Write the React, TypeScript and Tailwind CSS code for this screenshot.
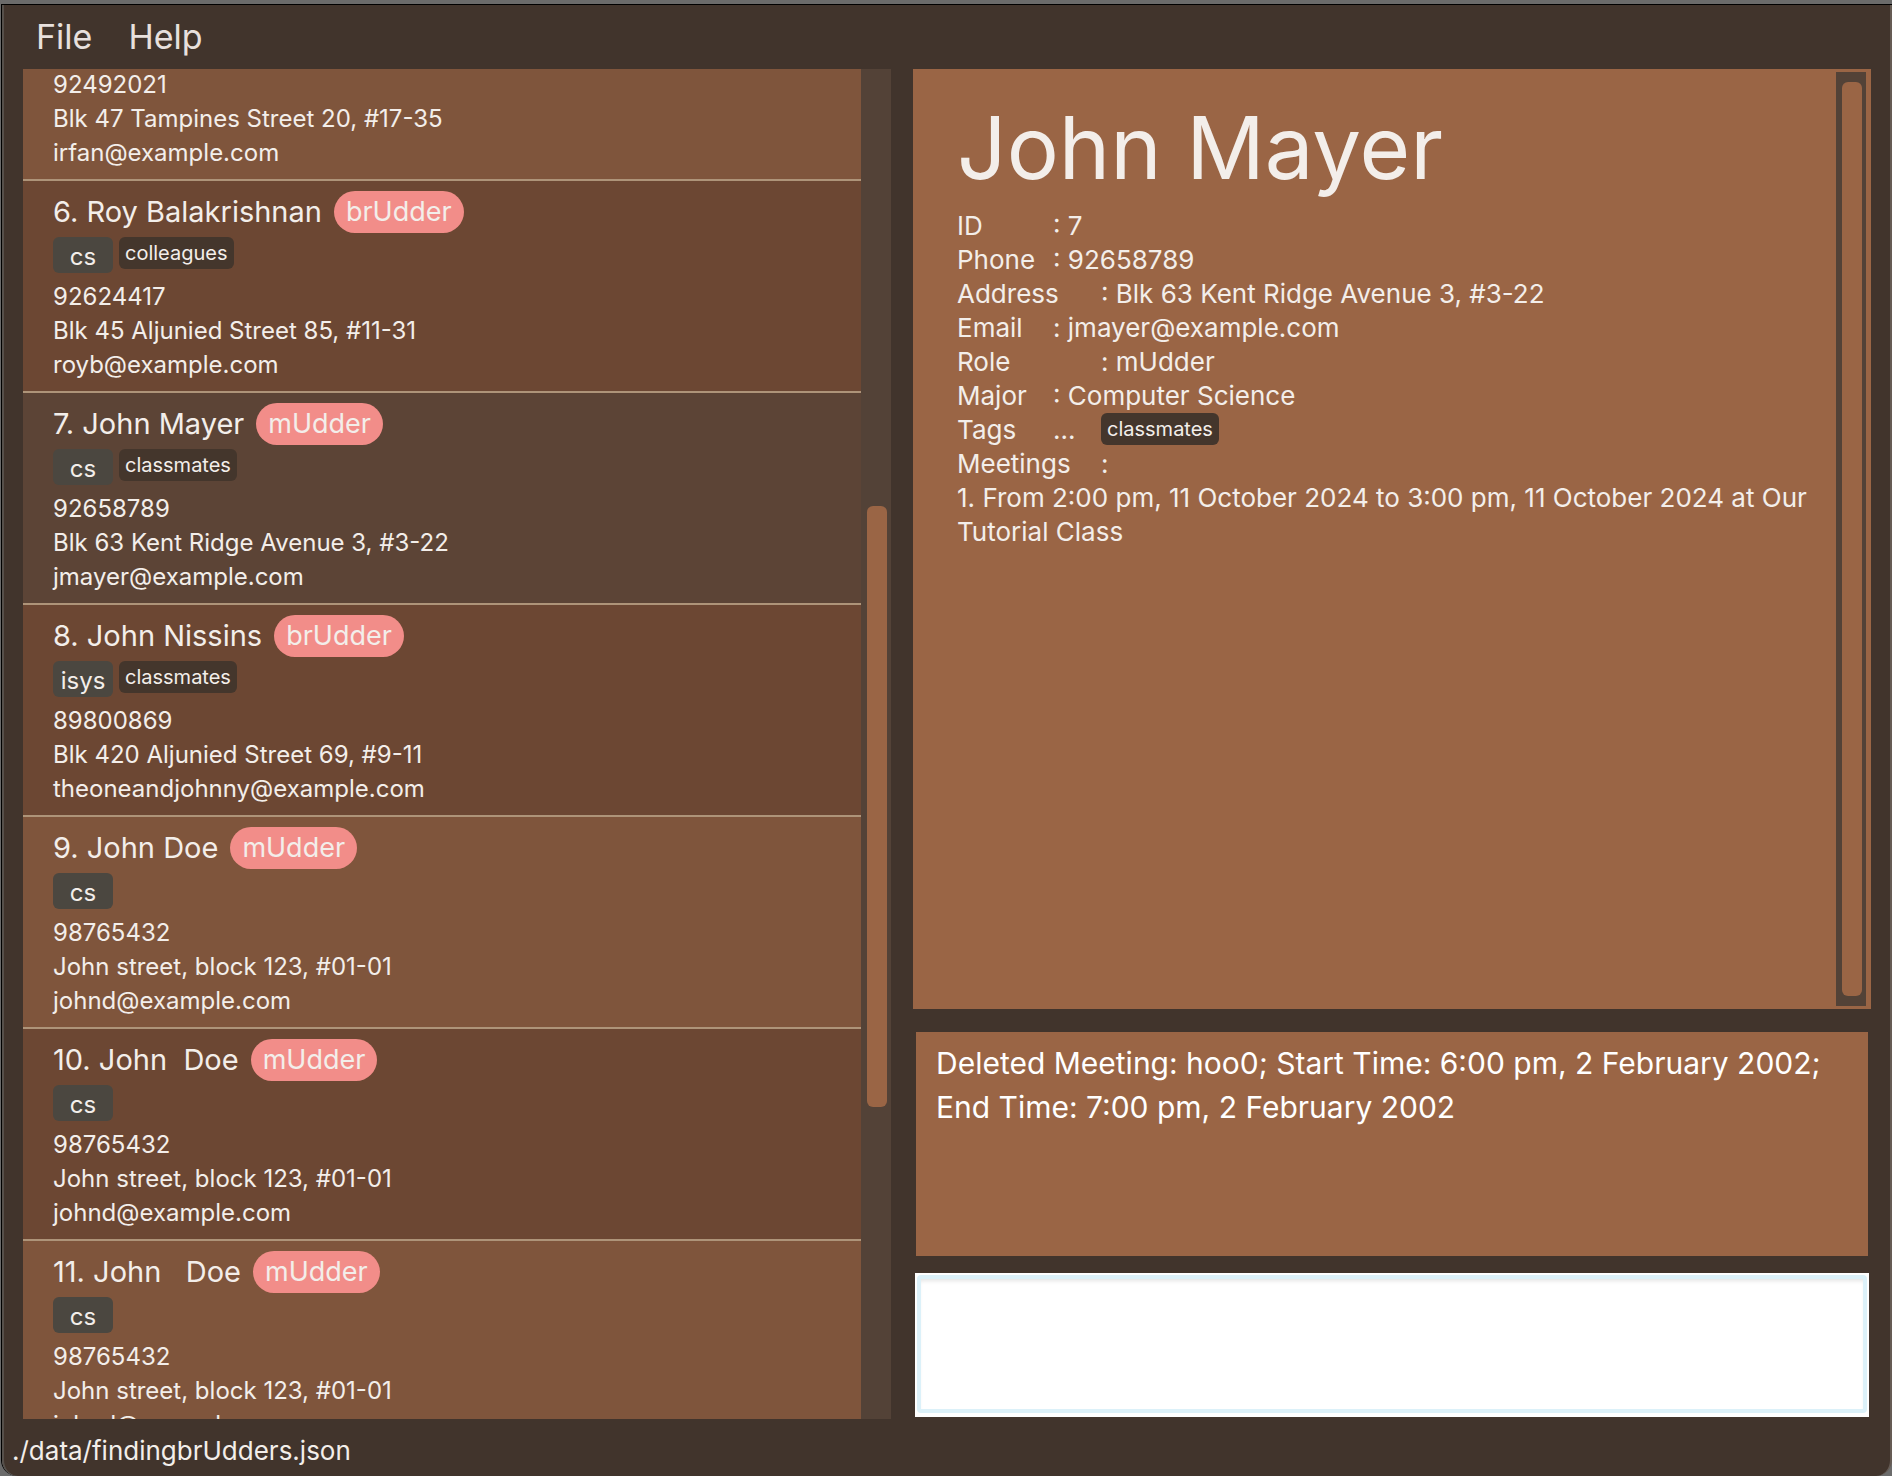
type Contact = {
  name?: string;
  role?: string;
  major?: string;
  tags?: string[];
  phone: string;
  address: string;
  email: string;
  tone: 'light' | 'dark' | 'selected';
};

const contacts: Contact[] = [
  { phone: '92492021', address: 'Blk 47 Tampines Street 20, #17-35', email: 'irfan@example.com', tone: 'light' },
  { name: '6. Roy Balakrishnan', role: 'brUdder', major: 'cs', tags: ['colleagues'], phone: '92624417', address: 'Blk 45 Aljunied Street 85, #11-31', email: 'royb@example.com', tone: 'dark' },
  { name: '7. John Mayer', role: 'mUdder', major: 'cs', tags: ['classmates'], phone: '92658789', address: 'Blk 63 Kent Ridge Avenue 3, #3-22', email: 'jmayer@example.com', tone: 'selected' },
  { name: '8. John Nissins', role: 'brUdder', major: 'isys', tags: ['classmates'], phone: '89800869', address: 'Blk 420 Aljunied Street 69, #9-11', email: 'theoneandjohnny@example.com', tone: 'dark' },
  { name: '9. John Doe', role: 'mUdder', major: 'cs', phone: '98765432', address: 'John street, block 123, #01-01', email: 'johnd@example.com', tone: 'light' },
  { name: '10. John  Doe', role: 'mUdder', major: 'cs', phone: '98765432', address: 'John street, block 123, #01-01', email: 'johnd@example.com', tone: 'dark' },
  { name: '11. John   Doe', role: 'mUdder', major: 'cs', phone: '98765432', address: 'John street, block 123, #01-01', email: 'johnd@example.com', tone: 'light' },
];

const tones = {
  light: 'bg-[#7f553c]',
  dark: 'bg-[#6c4733]',
  selected: 'bg-[#5c4436]',
};

const details = [
  { label: 'ID', value: '7', wide: false },
  { label: 'Phone', value: '92658789', wide: false },
  { label: 'Address', value: 'Blk 63 Kent Ridge Avenue 3, #3-22', wide: true },
  { label: 'Email', value: 'jmayer@example.com', wide: false },
  { label: 'Role', value: 'mUdder', wide: true },
  { label: 'Major', value: 'Computer Science', wide: false },
];

function Tag({ text }: { text: string }) {
  return (
    <span className="flex h-8 items-center rounded-md bg-[#44362c] px-1.5 text-[20px] leading-none">{text}</span>
  );
}

function ContactCard({ contact }: { contact: Contact }) {
  return (
    <li className={`shrink-0 border-b-2 border-[#ae9479] pr-4 pb-[9px] pl-[30px] ${tones[contact.tone]}`}>
      {contact.name && (
        <>
          <div className="flex items-center gap-3 pt-2.5">
            <h2 className="text-[29px] leading-[42px] whitespace-pre">{contact.name}</h2>
            <span className="flex h-[42px] items-center rounded-full bg-[#f28d89] px-3 text-[27px]">{contact.role}</span>
          </div>
          <div className="flex items-start gap-1.5 pt-1 pb-[7px]">
            <span className="flex h-9 w-[60px] items-center justify-center rounded-md bg-[#4b4740] pt-1 text-[24px] leading-none">
              {contact.major}
            </span>
            {contact.tags?.map((tag) => <Tag key={tag} text={tag} />)}
          </div>
        </>
      )}
      <p className="text-[24px] leading-[34px]">{contact.phone}</p>
      <p className="text-[24px] leading-[34px]">{contact.address}</p>
      <p className="text-[24px] leading-[34px]">{contact.email}</p>
    </li>
  );
}

export default function App() {
  return (
    <div className="flex h-screen flex-col bg-[#6b6b6b] pt-1 pl-px font-['Inter',sans-serif] text-[#f3eeea]">
      <div className="flex min-h-0 flex-1 flex-col rounded-b-2xl border-t border-l border-black">
        <div className="flex min-h-0 flex-1 flex-col rounded-b-2xl border-r-2 border-l-2 border-r-[#655b54] border-l-[#56504b] bg-[#41342c]">
          <nav className="flex h-16 shrink-0 items-center gap-9 px-8 pb-0.5 text-[34px] text-[#e8e0dd]">
            <button type="button">File</button>
            <button type="button">Help</button>
          </nav>

          <main className="flex min-h-0 flex-1 gap-[22px] pr-[19px] pl-[19px]">
            <section aria-label="Contacts" className="flex min-w-0 flex-[868] overflow-hidden">
              <ul className="-mt-px flex min-w-0 flex-1 flex-col">
                {contacts.map((contact, i) => (
                  <ContactCard key={i} contact={contact} />
                ))}
              </ul>
              <div className="flex w-[30px] flex-col bg-[#534237] pr-1 pl-1.5">
                <div className="flex-[437]" />
                <div className="flex-[601] rounded-md bg-[#9a6545]" />
                <div className="flex-[312]" />
              </div>
            </section>

            <div className="flex min-w-0 flex-[958] flex-col">
              <section aria-label="Contact details" className="flex min-h-0 flex-1 bg-[#9a6545] py-[3px] pr-[5px]">
                <div className="min-w-0 flex-1 pt-6 pl-11 text-[26px] leading-[34px]">
                  <h1 className="mb-[9px] text-[87px] leading-[104px]">John Mayer</h1>
                  <dl>
                    {details.map((row) => (
                      <div key={row.label} className="flex">
                        <dt className={row.wide ? 'w-36' : 'w-24'}>{row.label}</dt>
                        <dd>: {row.value}</dd>
                      </div>
                    ))}
                    <div className="flex h-[34px]">
                      <dt className="w-24">Tags</dt>
                      <dd className="flex">
                        <span className="w-12">...</span>
                        <Tag text="classmates" />
                      </dd>
                    </div>
                    <div className="flex">
                      <dt className="w-36">Meetings</dt>
                      <dd>:</dd>
                    </div>
                  </dl>
                  <p>1. From 2:00 pm, 11 October 2024 to 3:00 pm, 11 October 2024 at Our Tutorial Class</p>
                </div>
                <div className="flex w-[30px] flex-col bg-[#534237] py-2.5 pr-1 pl-1.5">
                  <div className="flex-1 rounded-md bg-[#9a6545]" />
                </div>
              </section>

              <textarea
                readOnly
                aria-label="Result"
                className="mx-[3px] mt-[23px] h-56 shrink-0 resize-none bg-[#9a6545] px-5 pt-[9px] text-[30px] leading-[44px] text-white outline-none"
                defaultValue="Deleted Meeting: hoo0; Start Time: 6:00 pm, 2 February 2002; End Time: 7:00 pm, 2 February 2002"
              />

              <div className="mx-0.5 mt-[17px] mb-0.5 flex h-36 shrink-0 bg-white p-0.5 pb-1">
                <input
                  type="text"
                  aria-label="Command"
                  className="min-w-0 flex-1 rounded-sm border-4 border-[#dcf1f9] bg-white px-4 text-[30px] text-black shadow-[inset_0_4px_4px_-2px_#e5e5e5] outline-none"
                />
              </div>
            </div>
          </main>

          <footer className="h-[57px] shrink-0 pl-2 text-[26px] leading-[64px]">./data/findingbrUdders.json</footer>
        </div>
      </div>
    </div>
  );
}
